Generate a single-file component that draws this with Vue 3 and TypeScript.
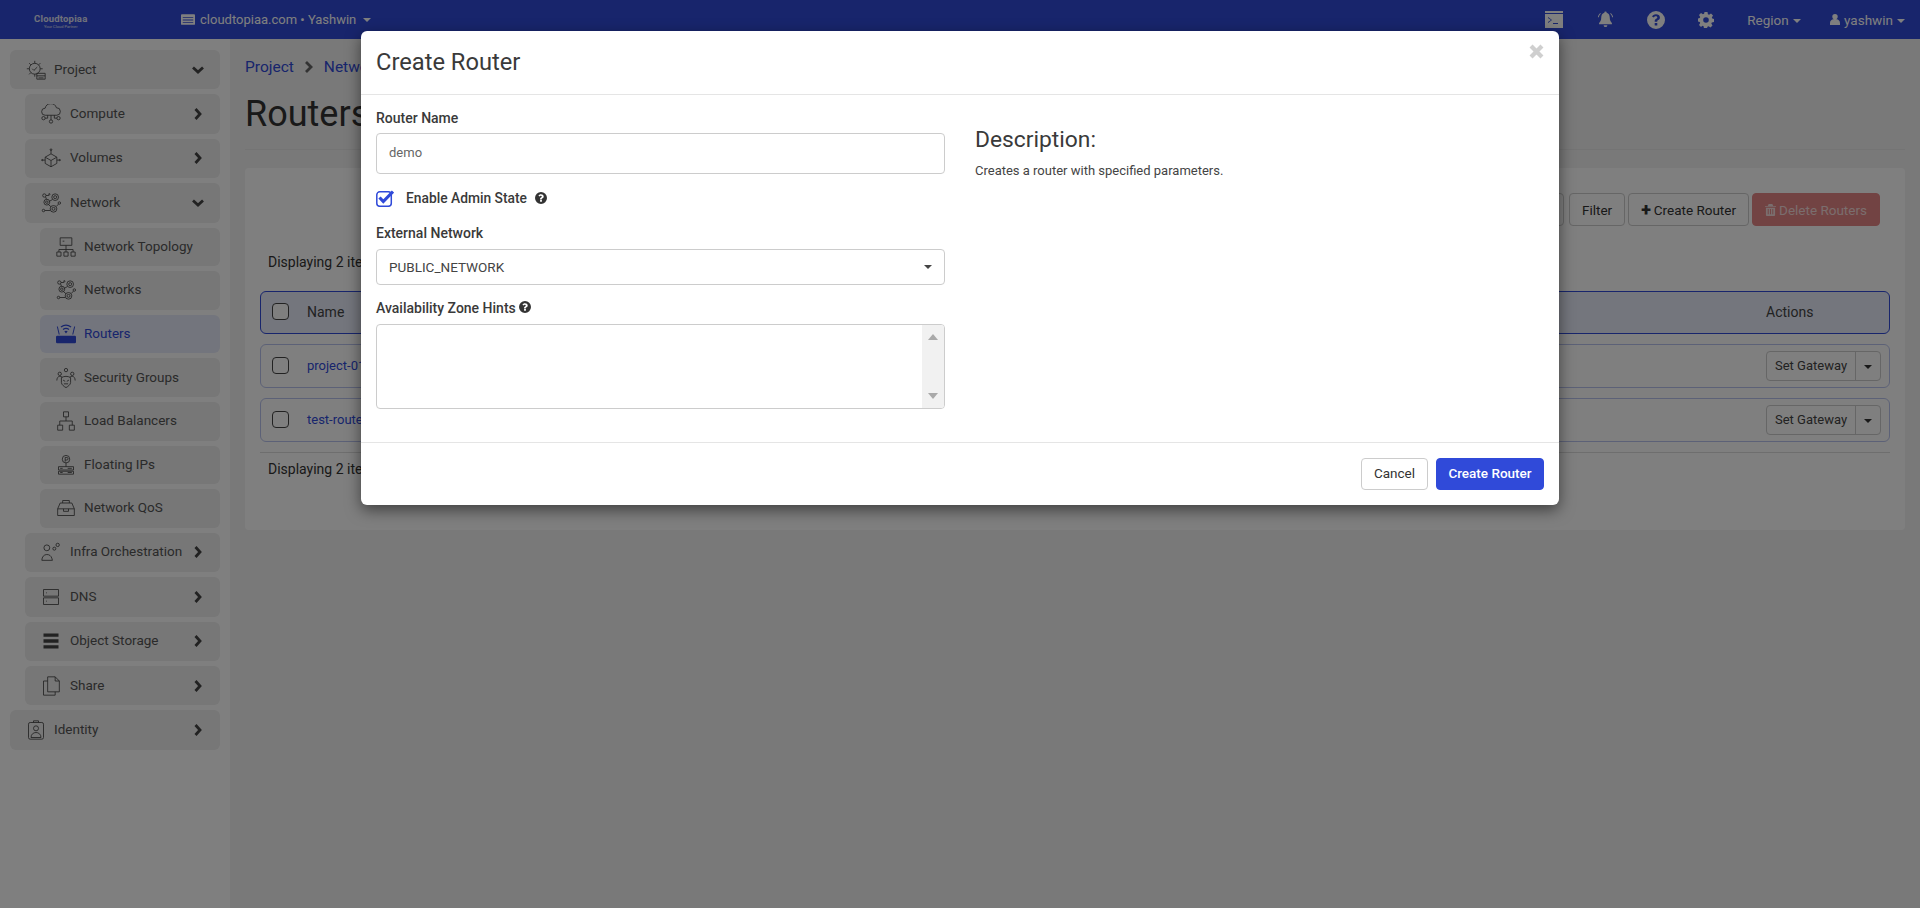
<template>
  <div class="page">
    <header class="navbar">
      <div class="brand">
        <span class="brand-name">Cloudtopiaa</span>
        <span class="brand-tag">Your Cloud Partner</span>
      </div>
      <div class="project-switch">
        <svg class="domain-icon" viewBox="0 0 16 12"><path d="M1 0h14a1 1 0 0 1 1 1v10a1 1 0 0 1-1 1H1a1 1 0 0 1-1-1V1a1 1 0 0 1 1-1zm1 3v1h12V3zm0 3v1h12V6zm0 3v1h12V9z" fill-rule="evenodd" /></svg>
        <span class="domain-text">cloudtopiaa.com • Yashwin</span>
        <i class="caret"></i>
      </div>
      <div class="nav-right">
        <svg class="nav-icon terminal" viewBox="0 0 18 17"><path fill-rule="evenodd" d="M0 0h18v2H0zM0 3h18v14H0zm3 3v1l3 2-3 2v1l4-3zm5 6v1h5v-1z" /></svg>
        <svg class="nav-icon bell" viewBox="0 0 18 17"><path d="M9 0a1.2 1.2 0 0 1 1.2 1.4C12.600 2 13.500 4 13.500 6.500c0 3 1 4.500 2.300 5.800V13.500H2.200v-1.200C3.500 11 4.500 9.500 4.500 6.500 4.500 4 5.400 2 7.800 1.400A1.200 1.200 0 0 1 9 0zM7 14.500h4a2 2 0 0 1-4 0zM3.500 1.500C2 2.700 1.200 4.300 1 6h1c.2-1.400.9-2.700 2-3.700zM14.500 1.500C16 2.700 16.800 4.300 17 6h-1c-.2-1.400-.9-2.700-2-3.700z" /></svg>
        <svg class="nav-icon help" viewBox="0 0 18 18"><path fill-rule="evenodd" d="M9 0a9 9 0 1 1 0 18A9 9 0 0 1 9 0zM9 3.200C6.900 3.200 5.600 4.200 5 5.600l1.900 1C7.300 5.800 7.900 5.300 8.800 5.300c.9 0 1.500.4 1.500 1.100 0 .6-.5.9-1.200 1.400C8.200 8.400 7.700 9 7.700 10.300v.5h2.500v-.4c0-.6.4-.9 1-1.300.9-.6 1.700-1.300 1.700-2.700 0-2-1.800-3.200-3.900-3.200zM7.700 12v2.600h2.600V12z" /></svg>
        <svg class="nav-icon cog" viewBox="0 0 16 16"><path fill-rule="evenodd" d="M6.500 0h3l.4 2.200 1.200.5L13 1.500l2 2-1.200 1.900.5 1.200 1.700.4v3l-2.200.4-.5 1.200 1.200 1.900-2 2-1.900-1.200-1.200.5-.4 1.700h-3l-.4-2.200-1.200-.5L3 15l-2-2 1.200-1.900-.5-1.200L0 9.500v-3l1.700-.4.5-1.200L1 3l2-2 1.900 1.200 1.200-.5zM8 5.200a2.800 2.800 0 1 0 0 5.600 2.800 2.800 0 0 0 0-5.600z" /></svg>
        <span class="nav-link region">Region<i class="caret"></i></span>
        <span class="nav-link user">
          <svg class="user-icon" viewBox="0 0 11 12"><path d="M5.500 0a3 3 0 0 1 3 3c0 1.200-.7 2.300-1.600 2.800C9.500 6 11 7.500 11 10.200V12H0v-1.800C0 7.500 1.500 6 4.100 5.800A3.100 3.100 0 0 1 2.500 3a3 3 0 0 1 3-3z" /></svg>
          yashwin<i class="caret"></i>
        </span>
      </div>
    </header>

    <div class="layout">
      <aside class="sidebar">
        <div
          v-for="item in menu"
          :key="item.label"
          class="side-item"
          :class="['level-' + item.level, { active: item.active }]"
        >
          <svg
            class="side-icon"
            :class="{ solid: item.solid }"
            viewBox="0 0 24 24"
          >
            <path :d="item.icon" />
          </svg>
          <span class="side-label">{{ item.label }}</span>
          <svg v-if="item.arrow" class="side-arrow" viewBox="0 0 14 14">
            <path :d="item.arrow === 'down' ? 'M2 4.500L7 9l5-4.500' : 'M4.500 2L9 7l-4.500 5'" />
          </svg>
        </div>
      </aside>

      <main class="content">
        <nav class="crumbs">
          <a>Project</a>
          <svg class="crumb-arrow" viewBox="0 0 10 14"><path d="M2 2l5 5-5 5" /></svg>
          <a>Network</a>
          <svg class="crumb-arrow" viewBox="0 0 10 14"><path d="M2 2l5 5-5 5" /></svg>
          <a>Routers</a>
        </nav>
        <h1 class="title">Routers</h1>
        <hr class="title-rule" />

        <section class="card">
          <div class="toolbar">
            <button class="btn search-btn"></button>
            <button class="btn">Filter</button>
            <button class="btn"><b class="plus">+</b> Create Router</button>
            <button class="btn danger">
              <svg class="trash" viewBox="0 0 12 13"><path fill-rule="evenodd" d="M4 0h4l1 2h3v1H0V2h3zM1 4h10v8a1 1 0 0 1-1 1H2a1 1 0 0 1-1-1zm2 1.500V11h1V5.500zm2.500 0V11h1V5.500zm2.500 0V11h1V5.500z" /></svg>
              Delete Routers
            </button>
          </div>
          <p class="count">Displaying 2 items</p>
          <div class="table-head">
            <span class="check"></span>
            <span class="col-name">Name</span>
            <span class="col-actions">Actions</span>
          </div>
          <div v-for="row in routers" :key="row" class="table-row">
            <span class="check"></span>
            <a class="col-name">{{ row }}</a>
            <div class="split">
              <span class="split-main">Set Gateway</span>
              <span class="split-toggle"><i class="caret"></i></span>
            </div>
          </div>
          <hr class="table-rule" />
          <p class="count foot">Displaying 2 items</p>
        </section>
      </main>
    </div>

    <div class="backdrop"></div>

    <div class="modal">
      <div class="modal-head">
        <h2>Create Router</h2>
        <svg class="close" viewBox="0 0 14 14"><path d="M2.500 2.500l9 9M11.500 2.500l-9 9" /></svg>
      </div>
      <div class="modal-body">
        <form class="form" @submit.prevent>
          <label class="field-label">Router Name</label>
          <input class="input" type="text" value="demo" />

          <div class="check-line">
            <svg class="tick" viewBox="0 0 18 17">
              <rect x="0.800" y="1.800" width="14.500" height="14.500" rx="3" />
              <path class="tick-mark" d="M3.500 7.500l3.800 4L17 1.500" />
            </svg>
            <span class="check-text">Enable Admin State</span>
            <svg class="help-mini" viewBox="0 0 12 12"><path fill-rule="evenodd" :d="helpPath" /></svg>
          </div>

          <label class="field-label ext">External Network</label>
          <div class="select">PUBLIC_NETWORK<i class="caret"></i></div>

          <label class="field-label zone">
            Availability Zone Hints
            <svg class="help-mini" viewBox="0 0 12 12"><path fill-rule="evenodd" :d="helpPath" /></svg>
          </label>
          <div class="listbox">
            <div class="scroll">
              <i class="arrow-up"></i>
              <i class="arrow-down"></i>
            </div>
          </div>
        </form>
        <div class="desc">
          <h3>Description:</h3>
          <p>Creates a router with specified parameters.</p>
        </div>
      </div>
      <div class="modal-foot">
        <button class="btn-cancel">Cancel</button>
        <button class="btn-primary">Create Router</button>
      </div>
    </div>
  </div>
</template>

<script setup lang="ts">
interface MenuItem {
  label: string
  level: number
  icon: string
  arrow?: 'down' | 'right'
  active?: boolean
  solid?: boolean
}

const c = (x: number, y: number, r: number) =>
  `M${x - r} ${y}a${r} ${r} 0 1 0 ${r * 2} 0a${r} ${r} 0 1 0 ${-r * 2} 0z`

const helpPath =
  'M6 0a6 6 0 1 1 0 12A6 6 0 0 1 6 0zM6 2.300c-1.300 0-2.100.6-2.600 1.500l1.100.8c.3-.5.7-.8 1.300-.8.600 0 1 .3 1 .7 0 .4-.3.6-.8.9-.6.4-1 .8-1 1.700v.3h1.800v-.2c0-.4.2-.6.700-.9.600-.4 1.200-.9 1.200-1.900 0-1.300-1.300-2.100-2.700-2.100zM5.100 8.100v1.700h1.800V8.100z'

const networkIcon =
  c(4, 3, 2) + c(17, 5, 4) + c(17, 5, 1.800) + c(7, 11, 3.500) + c(7, 11, 1.500) + c(15, 19, 4) + c(15, 19, 1.800) +
  c(3, 21, 1.500) + c(22, 12, 1.500) + c(10, 1.500, 0.800) +
  'M5.500 4.500L6.500 7.500M10 10L13.500 8M9 14L12 16.500M18.500 16L21 13.300M4.500 21H11M6 3H9.500'

const menu: MenuItem[] = [
  {
    label: 'Project', level: 0, arrow: 'down',
    icon: c(10.500, 10.500, 6.500) + 'M10.500 1v3M1 10.500h3M3.800 3.800l2 2M17.200 3.800l-2 2M3.800 17.200l2-2M10.500 17v3M17 10.500h3M7.500 10.500l2 2 4-4M13 16h10v7H13zM13 19h10M15 21.500h6',
  },
  {
    label: 'Compute', level: 1, arrow: 'right',
    icon: 'M5 13.500a4.200 4.200 0 0 1 0-8.500 7 7 0 0 1 13.500-.5A4.500 4.500 0 0 1 19 13.500zM12 13.500v5.500M8 13.500V17H5M16 13.500V17h3' + c(3, 17, 2) + c(12, 21, 2) + c(21, 17, 2),
  },
  {
    label: 'Volumes', level: 1, arrow: 'right',
    icon: 'M12 7l7 4v7.500L12 22.500 5 18.500V11zM5 11l7 4 7-4M12 15v7.500M12 2v5M1.500 14.500H5M19 14.500h3.500' + c(12, 2, 1) + c(1.500, 14.500, 0.800) + c(22.500, 14.500, 0.800),
  },
  { label: 'Network', level: 1, arrow: 'down', icon: networkIcon },
  {
    label: 'Network Topology', level: 2,
    icon: 'M5 1h14v9H5zM8 5h2M12 10v5M3.500 15h17M3.500 15v3M12 15v3M20.500 15v3M1 18h5v5H1zM9.500 18h5v5h-5zM18 18h5v5h-5z',
  },
  { label: 'Networks', level: 2, icon: networkIcon },
  {
    label: 'Routers', level: 2, active: true, solid: true,
    icon: 'M1.500 14h21a1.500 1.500 0 0 1 1.500 1.500v6a1.500 1.500 0 0 1-1.500 1.500h-21A1.500 1.500 0 0 1 0 21.500v-6A1.500 1.500 0 0 1 1.500 14zM1 3h1.200L4.500 12.500H3.300zM21.800 3H23L20.700 12.500H19.500zM5.500 3a11 11 0 0 1 13 0l-.8 1.100a9.500 9.500 0 0 0-11.400 0zM8 6a7 7 0 0 1 8 0l-.8 1.100a5.500 5.500 0 0 0-6.400 0zM10 8.800a3.500 3.500 0 0 1 4 0L12 11.500z',
  },
  {
    label: 'Security Groups', level: 2,
    icon: c(12, 2.500, 2) + c(4.500, 7, 2) + c(19.500, 7, 2) + 'M1 15c0-3 1.500-5 3.500-5s3 1 3 1M23 15c0-3-1.500-5-3.500-5s-3 1-3 1M6.500 11.500c3.500-2 7.500-2 11 0v6c0 2.500-3.500 5-5.500 6-2-1-5.500-3.500-5.500-6zM8.500 14.500l2.500 1.500M15.500 14.500L13 16M9.500 19h5',
  },
  {
    label: 'Load Balancers', level: 2,
    icon: 'M9 1h6v6H9zM12 7v5M4.500 17v-5h15v5M2 17h6v6H2zM16 17h6v6h-6z',
  },
  {
    label: 'Floating IPs', level: 2,
    icon: c(12, 5, 4.500) + 'M12 9.500V14M11 3h2a1 1 0 0 1 0 3h-2M11 3v5M3 14h18v4H3zM3 19.500h18V23H3zM5 16h3M5 21h3M14 16h5M14 21h5',
  },
  {
    label: 'Network QoS', level: 2,
    icon: 'M2 13l3-7h14l3 7v8H2zM2 13h20M8 6V3h8v3M9 13v3h6v-3',
  },
  {
    label: 'Infra Orchestration', level: 1, arrow: 'right',
    icon: c(7, 7, 3.500) + c(16, 8, 1.800) + c(20, 3.500, 2) + 'M1 22c0-4 2.500-7 6-7 3 0 5 1.500 6 4.500l.7 2.500z',
  },
  {
    label: 'DNS', level: 1, arrow: 'right',
    icon: 'M3 3h18v8H3zM3 13h18v8H3zM6 7h1M6 17h1',
  },
  {
    label: 'Object Storage', level: 1, arrow: 'right', solid: true,
    icon: 'M3 3h18v4H3zM3 10h18v4H3zM3 17h18v4H3z',
  },
  {
    label: 'Share', level: 1, arrow: 'right',
    icon: 'M8 1h9l5 5v13H8zM17 1v5h5M8 6H3v17h14v-4',
  },
  {
    label: 'Identity', level: 0, arrow: 'right',
    icon: 'M5 3h14a2 2 0 0 1 2 2v16a2 2 0 0 1-2 2H5a2 2 0 0 1-2-2V5a2 2 0 0 1 2-2zM9 3V1h6v2' + c(12, 10, 3) + 'M6 21c0-4 3-6 6-6s6 2 6 6z',
  },
]

const routers = ['project-01-router', 'test-router']
</script>

<style>
html,
body {
  margin: 0;
  background: #f2f2f2;
}
</style>

<style scoped>
.page {
  position: relative;
  height: 908px;
  overflow: hidden;
  font-family: Roboto, "Liberation Sans", sans-serif;
  font-size: 13px;
  color: #444;
  background: #f2f2f2;
}

.navbar {
  height: 39px;
  background: #304ad9;
  color: #fff;
  display: flex;
  align-items: center;
  font-size: 13.500px;
}

.brand {
  width: 181px;
  padding: 4px 0 0 34px;
  box-sizing: border-box;
  display: flex;
  flex-direction: column;
  line-height: 1;
  color: #e0e4f5;
}

.brand-name {
  font-size: 9.500px;
  font-weight: 700;
  letter-spacing: 0.2px;
}

.brand-tag {
  font-size: 4px;
  margin: 2px 0 0 10px;
}

.project-switch {
  display: flex;
  align-items: center;
  gap: 5px;
}

.domain-text {
  font-size: 13px;
  margin-right: 2px;
}

.domain-icon {
  width: 14px;
  height: 11px;
  fill: #fff;
}

.caret {
  display: inline-block;
  width: 0;
  height: 0;
  border-left: 4px solid transparent;
  border-right: 4px solid transparent;
  border-top: 4px solid currentColor;
  margin-left: 4px;
  vertical-align: 2px;
}

.project-switch .caret {
  margin-left: 0;
}

.nav-right {
  margin-left: auto;
  display: flex;
  align-items: center;
  padding-right: 15px;
}

.nav-icon {
  fill: #fff;
}

.terminal {
  width: 18px;
  height: 17px;
  margin-right: 34px;
}

.bell {
  width: 17px;
  height: 17px;
  margin-right: 33px;
}

.help {
  width: 18px;
  height: 18px;
  margin-right: 33px;
}

.cog {
  width: 16px;
  height: 16px;
  margin-right: 33px;
}

.region {
  margin-right: 29px;
}

.user-icon {
  width: 10px;
  height: 11px;
  fill: #fff;
  margin-right: 1px;
}

.layout {
  display: flex;
  height: 869px;
}

.sidebar {
  width: 230px;
  flex: none;
  box-sizing: border-box;
  padding: 11px 10px 0;
  background: #fff;
  display: flex;
  flex-direction: column;
  gap: 5px;
}

.side-item {
  height: 39.400px;
  flex: none;
  display: flex;
  align-items: center;
  border-radius: 6px;
  background: #eeeeee;
  color: #555;
  font-size: 13.500px;
  padding-left: 16px;
  padding-right: 15px;
}

.level-1 {
  margin-left: 15px;
}

.level-2 {
  margin-left: 30px;
  height: 38.600px;
}

.level-1 .side-label {
  margin-left: 1px;
}

.side-item.active {
  background: #e7ebfa;
  color: #304ad9;
}

.side-icon {
  width: 20px;
  height: 20px;
  flex: none;
  margin-right: 8px;
  fill: none;
  stroke: #444;
  stroke-width: 1;
}

.side-icon.solid {
  fill: #444;
  stroke: none;
}

.active .side-icon.solid {
  fill: #304ad9;
}

.side-label {
  flex: 1;
  margin-top: -2px;
}

.side-arrow {
  width: 14px;
  height: 14px;
  fill: none;
  stroke: #444;
  stroke-width: 2.800;
  flex: none;
}

.content {
  flex: 1;
  min-width: 0;
  padding: 0 15px;
}

.crumbs {
  display: flex;
  align-items: center;
  height: 55px;
  font-size: 15.500px;
  color: #304ad9;
  white-space: nowrap;
}

.crumb-arrow {
  width: 10px;
  height: 14px;
  margin: 0 10px;
  fill: none;
  stroke: #666;
  stroke-width: 2.800;
}

.title {
  margin: 0;
  font-size: 36px;
  font-weight: 400;
  line-height: 40px;
  color: #333;
}

.title-rule {
  margin: 15px 0 18px;
  border: 0;
  border-top: 1px solid #e8e8e8;
}

.card {
  height: 362px;
  box-sizing: border-box;
  background: #fff;
  border-radius: 4px;
  padding: 25px 15px 0;
}

.toolbar {
  display: flex;
  justify-content: flex-end;
  gap: 3px;
  padding-right: 10px;
}

.btn {
  height: 33px;
  box-sizing: border-box;
  padding: 0 12px;
  border: 1px solid #ccc;
  border-radius: 4px;
  background: #fff;
  font: inherit;
  font-size: 13.500px;
  color: #333;
  display: flex;
  align-items: center;
  gap: 3px;
}

.search-btn {
  width: 66px;
  margin-right: 2px;
}

.plus {
  font-size: 18px;
  line-height: 1;
  font-weight: 900;
}

.danger {
  background: #e58686;
  border-color: #e58686;
  color: #f5dcdc;
}

.trash {
  width: 11px;
  height: 12px;
  fill: #f5dcdc;
}

.count {
  margin: 0;
  padding-left: 8px;
  font-size: 14px;
  line-height: 16px;
  color: #333;
}

.toolbar + .count {
  margin: 28px 0 21px;
}

.foot {
  margin-top: 8px;
}

.table-head,
.table-row {
  display: flex;
  align-items: center;
  box-sizing: border-box;
  border-radius: 6px;
  background: #fff;
  padding-left: 11px;
  padding-right: 8px;
}

.table-head {
  height: 43px;
  border: 1px solid #304ad9;
  background: #e8ecfb;
  font-size: 14px;
  margin-bottom: 10px;
  color: #444;
}

.table-head span:not(.check) {
  margin-top: -2px;
}

.table-row {
  height: 44px;
  border: 1px solid #b9c3ee;
  margin-bottom: 10px;
}

.check {
  width: 15px;
  height: 15px;
  flex: none;
  border: 1px solid #444;
  border-radius: 4px;
  background: #fff;
  box-sizing: content-box;
  margin-top: -2px;
}

.col-name {
  margin-left: 18px;
}

a.col-name {
  color: #304ad9;
  font-size: 13px;
  margin-top: -2px;
}

.col-actions {
  margin-left: auto;
  width: 115px;
}

.split {
  margin-left: auto;
  display: flex;
  height: 30px;
  box-sizing: border-box;
  border: 1px solid #ccc;
  border-radius: 4px;
  align-items: center;
  font-size: 13px;
  color: #444;
}

.split-main {
  width: 88px;
  text-align: center;
  border-right: 1px solid #ccc;
  line-height: 28px;
}

.split-toggle {
  width: 24px;
  text-align: center;
  color: #333;
}

.split-toggle .caret {
  margin-left: 0;
}

.table-rule {
  margin: 0;
  border: 0;
  border-top: 1px solid #ddd;
}

.backdrop {
  position: absolute;
  inset: 0;
  background: rgba(0, 0, 0, 0.5);
}

.modal {
  position: absolute;
  top: 31px;
  left: 361px;
  width: 1198px;
  height: 474px;
  box-sizing: border-box;
  display: flex;
  flex-direction: column;
  background: #fff;
  border-radius: 6px;
  box-shadow: 0 5px 15px rgba(0, 0, 0, 0.5);
  color: #333;
}

.modal-head {
  height: 64px;
  flex: none;
  box-sizing: border-box;
  padding: 0 15px 2px;
  border-bottom: 1px solid #e5e5e5;
  display: flex;
  align-items: center;
  justify-content: space-between;
}

.modal-head h2 {
  margin: 0;
  font-size: 23.700px;
  font-weight: 400;
  color: #3a3a3a;
}

.close {
  width: 17px;
  height: 17px;
  margin: 0 -1px 20px 0;
  fill: none;
  stroke: #cfcfcf;
  stroke-width: 3.500;
}

.modal-body {
  flex: 1;
  display: flex;
  padding: 15px;
  gap: 30px;
}

.form {
  width: 569px;
  flex: none;
}

.field-label {
  display: block;
  font-size: 14px;
  font-weight: 500;
  line-height: 16px;
  color: #3a3a3a;
  margin-bottom: 7px;
}

.input {
  display: block;
  width: 100%;
  height: 41px;
  box-sizing: border-box;
  border: 1px solid #ccc;
  border-radius: 4px;
  padding: 0 12px 2px;
  font: inherit;
  font-size: 13px;
  color: #666;
  outline: none;
}

.check-line {
  display: flex;
  align-items: center;
  height: 18px;
  margin-top: 15px;
  font-size: 13.800px;
  font-weight: 500;
  color: #3a3a3a;
}

.tick {
  width: 18px;
  height: 17px;
  flex: none;
  margin-right: 12px;
  fill: none;
  stroke: #304ad9;
  stroke-width: 1.500;
}

.tick-mark {
  stroke-width: 3.200;
  stroke: #304ad9;
}

.check-text {
  margin-right: 8px;
}

.help-mini {
  width: 12px;
  height: 12px;
  fill: #333;
}

.ext {
  margin-top: 18px;
  margin-bottom: 8px;
}

.select {
  height: 36px;
  box-sizing: border-box;
  border: 1px solid #ccc;
  border-radius: 4px;
  padding: 0 12px;
  display: flex;
  align-items: center;
  justify-content: space-between;
  font-size: 13.500px;
  color: #444;
}

.select .caret {
  color: #444;
  margin-right: 0;
}

.zone {
  margin-top: 15px;
  margin-bottom: 8px;
}

.listbox {
  height: 85px;
  box-sizing: border-box;
  border: 1px solid #ccc;
  border-radius: 4px;
  display: flex;
  justify-content: flex-end;
  overflow: hidden;
}

.scroll {
  width: 22px;
  background: #f1f1f1;
  display: flex;
  flex-direction: column;
  justify-content: space-between;
  align-items: center;
  padding: 9px 0;
  box-sizing: border-box;
}

.arrow-up,
.arrow-down {
  width: 0;
  height: 0;
  border-left: 5px solid transparent;
  border-right: 5px solid transparent;
}

.arrow-up {
  border-bottom: 6px solid #a9a9a9;
}

.arrow-down {
  border-top: 6px solid #a9a9a9;
}

.desc h3 {
  margin: 17px 0 0;
  font-size: 22.800px;
  font-weight: 400;
  line-height: 26px;
  color: #3a3a3a;
}

.desc p {
  margin: 10px 0 0;
  font-size: 13px;
  line-height: 16px;
  color: #444;
}

.modal-foot {
  height: 63px;
  flex: none;
  box-sizing: border-box;
  border-top: 1px solid #e5e5e5;
  padding: 15px;
  display: flex;
  justify-content: flex-end;
  gap: 8px;
}

.btn-cancel,
.btn-primary {
  height: 32px;
  box-sizing: border-box;
  border-radius: 4px;
  font: inherit;
  font-size: 13.500px;
  padding: 0 0 2px;
}

.btn-cancel {
  width: 67px;
  background: #fff;
  border: 1px solid #ccc;
  color: #333;
}

.btn-primary {
  width: 108px;
  background: #304ad9;
  border: 1px solid #304ad9;
  color: #fff;
  font-weight: 500;
}
</style>
